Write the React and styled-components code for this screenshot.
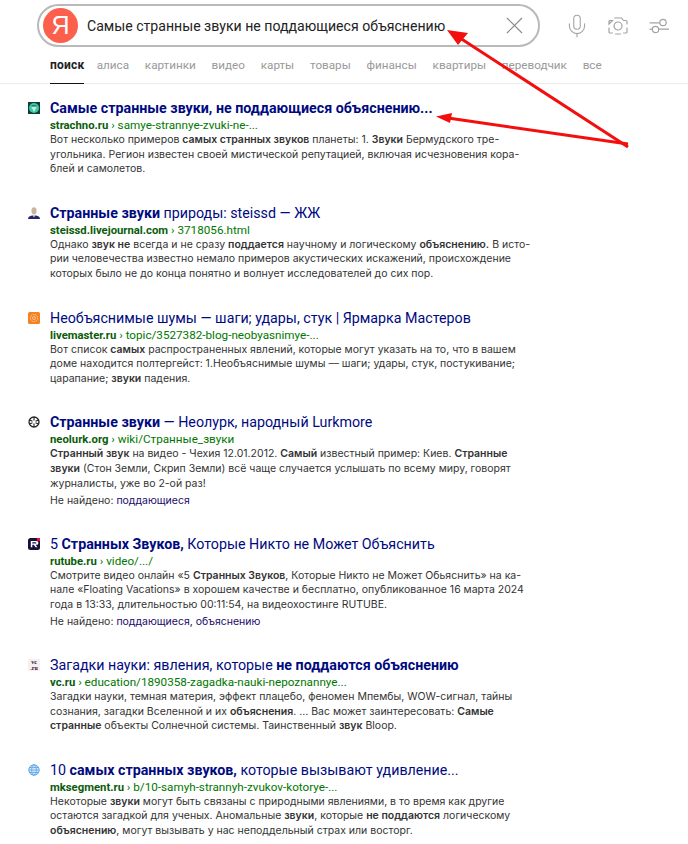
import styled, { createGlobalStyle } from "styled-components";
import { Mic, X } from "lucide-react";

const tabs = ["алиса", "картинки", "видео", "карты", "товары", "финансы", "квартиры", "переводчик", "все"];

const results = [
  {
    icon: "strachno",
    title: <><b>Самые странные звуки, не поддающиеся объяснению...</b></>,
    host: "strachno.ru",
    path: "samye-strannye-zvuki-ne-...",
    lines: [
      <>Вот несколько примеров <b>самых странных звуков</b> планеты: 1. <b>Звуки</b> Бермудского тре-</>,
      <>угольника. Регион известен своей мистической репутацией, включая исчезновения кора-</>,
      <>блей и самолетов.</>,
    ],
  },
  {
    icon: "person",
    title: <><b>Странные звуки</b> природы: steissd — ЖЖ</>,
    host: "steissd.livejournal.com",
    path: "3718056.html",
    lines: [
      <>Однако <b>звук не</b> всегда и не сразу <b>поддается</b> научному и логическому <b>объяснению.</b> В исто-</>,
      <>рии человечества известно немало примеров акустических искажений, происхождение</>,
      <>которых было не до конца понятно и волнует исследователей до сих пор.</>,
    ],
  },
  {
    icon: "livemaster",
    title: <>Необъяснимые шумы — шаги; удары, стук | Ярмарка Мастеров</>,
    host: "livemaster.ru",
    path: "topic/3527382-blog-neobyasnimye-...",
    lines: [
      <>Вот список <b>самых</b> распространенных явлений, которые могут указать на то, что в вашем</>,
      <>доме находится полтергейст: 1.Необъяснимые шумы — шаги; удары, стук, постукивание;</>,
      <>царапание; <b>звуки</b> падения.</>,
    ],
  },
  {
    icon: "neolurk",
    title: <><b>Странные звуки</b> — Неолурк, народный Lurkmore</>,
    host: "neolurk.org",
    path: "wiki/Странные_звуки",
    lines: [
      <><b>Странный звук</b> на видео - Чехия 12.01.2012. <b>Самый</b> известный пример: Киев. <b>Странные</b></>,
      <><b>звуки</b> (Стон Земли, Скрип Земли) всё чаще случается услышать по всему миру, говорят</>,
      <>журналисты, уже во 2-ой раз!</>,
    ],
    missing: "поддающиеся",
  },
  {
    icon: "rutube",
    title: <>5 <b>Странных Звуков,</b> Которые Никто не Может Объяснить</>,
    host: "rutube.ru",
    path: "video/.../",
    lines: [
      <>Смотрите видео онлайн «5 <b>Странных Звуков</b>, Которые Никто не Может Обьяснить» на ка-</>,
      <>нале «Floating Vacations» в хорошем качестве и бесплатно, опубликованное 16 марта 2024</>,
      <>года в 13:33, длительностью 00:11:54, на видеохостинге RUTUBE.</>,
    ],
    missing: "поддающиеся, объяснению",
  },
  {
    icon: "vc",
    title: <>Загадки науки: явления, которые <b>не поддаются объяснению</b></>,
    host: "vc.ru",
    path: "education/1890358-zagadka-nauki-nepoznannye...",
    lines: [
      <>Загадки науки, темная материя, эффект плацебо, феномен Мпембы, WOW-сигнал, тайны</>,
      <>сознания, загадки Вселенной и их <b>объяснения</b>. ... Вас может заинтересовать: <b>Самые</b></>,
      <><b>странные</b> объекты Солнечной системы. Таинственный <b>звук</b> Bloop.</>,
    ],
  },
  {
    icon: "globe",
    title: <>10 <b>самых странных звуков,</b> которые вызывают удивление...</>,
    host: "mksegment.ru",
    path: "b/10-samyh-strannyh-zvukov-kotorye-...",
    lines: [
      <>Некоторые <b>звуки</b> могут быть связаны с природными явлениями, в то время как другие</>,
      <>остаются загадкой для ученых. Аномальные <b>звуки</b>, которые <b>не поддаются</b> логическому</>,
      <><b>объяснению</b>, могут вызывать у нас неподдельный страх или восторг.</>,
    ],
  },
];

const Favicon = ({ kind }) => {
  if (kind === "strachno")
    return (
      <svg width="12" height="12" viewBox="0 0 12 12">
        <rect width="12" height="12" fill="#123c3a" />
        <circle cx="6" cy="6" r="5" fill="#3fc9a4" />
        <path d="M3 4.500h6L6 10z" fill="#b8f0dc" />
        <path d="M4 3h4l1 1.500H3z" fill="#1d7f6c" />
      </svg>
    );
  if (kind === "person")
    return (
      <svg width="12" height="12" viewBox="0 0 12 12">
        <path d="M0 12c0-2.400 2-3 4-3.500h4c2 .5 4 1.100 4 3.500z" fill="#24246e" />
        <ellipse cx="6" cy="3.800" rx="2.600" ry="3.500" fill="#c9b59b" />
        <path d="M5 7h2v2L6 10.500 5 9z" fill="#e2d5c5" />
      </svg>
    );
  if (kind === "livemaster")
    return (
      <svg width="12" height="12" viewBox="0 0 12 12">
        <rect width="12" height="12" rx="1.500" fill="#f58220" />
        <circle cx="6" cy="6" r="3.600" fill="none" stroke="#ffd0a3" strokeWidth="1" strokeDasharray="1.500 .7" />
        <circle cx="6" cy="6" r="1.500" fill="none" stroke="#ffd0a3" strokeWidth="0.800" />
      </svg>
    );
  if (kind === "neolurk")
    return (
      <svg width="12" height="12" viewBox="0 0 12 12">
        <circle cx="6" cy="6" r="5" fill="#fff" stroke="#222" strokeWidth="1.300" />
        <path d="M6 1v3.500M6 7.500V11M1.500 4l3 1.300M10.500 4l-3 1.300M1.500 8l3-1.300M10.500 8l-3-1.300" stroke="#222" strokeWidth="1.100" />
      </svg>
    );
  if (kind === "rutube")
    return (
      <svg width="12" height="12" viewBox="0 0 12 12">
        <rect width="12" height="12" rx="2.500" fill="#14123a" />
        <circle cx="11" cy="1" r="2.200" fill="#ed143b" />
        <path d="M2.800 3h5.700a1.400 1.400 0 0 1 0 3.800H4.300V9.200H2.800zM4.300 4.300v1.200h3.900V4.300zM5.800 6.800h1.800l1.800 2.400H7.600z" fill="#fff" />
      </svg>
    );
  if (kind === "vc") return <VcMark>vc<br />.ru</VcMark>;
  return (
    <svg width="12" height="12" viewBox="0 0 12 12" fill="none">
      <circle cx="6" cy="6" r="5.200" fill="#cfe6fa" stroke="#5aa5e6" strokeWidth="1" />
      <ellipse cx="6" cy="6" rx="2.300" ry="5.200" stroke="#5aa5e6" strokeWidth="0.800" />
      <path d="M1 6h10M1.800 3.500h8.400M1.800 8.500h8.400" stroke="#5aa5e6" strokeWidth="0.800" />
    </svg>
  );
};

const App = () => {
  return (
    <Page>
      <GlobalStyle />
      <Header>
        <SearchBox>
          <Logo>Я</Logo>
          <Query>Самые странные звуки не поддающиеся объяснению</Query>
          <ClearButton><X size={29} strokeWidth={0.9} /></ClearButton>
        </SearchBox>
        <Tools>
          <ToolSlot><Mic size={26} strokeWidth={1} /></ToolSlot>
          <ToolSlot>
            <svg width="20" height="20" viewBox="0 0 20 20" fill="none" stroke="#a3a3a3" strokeWidth="1.200">
              <path d="M6.500 2h7l2 2.500H18a1 1 0 0 1 1 1V8M19 12v4a1 1 0 0 1-1 1h-2.500M4.500 17H2a1 1 0 0 1-1-1v-4M1 8V5.500a1 1 0 0 1 1-1h2.500z" strokeLinecap="round" />
              <path d="M7.500 18h5" strokeLinecap="round" />
              <circle cx="10" cy="10" r="4" />
            </svg>
          </ToolSlot>
          <ToolSlot>
            <svg width="20" height="20" viewBox="0 0 20 20" fill="none" stroke="#a3a3a3" strokeWidth="1.200">
              <path d="M1 6.800h9.500M1 13.200h2.500M10 13.200h9.500" strokeLinecap="round" />
              <circle cx="14" cy="6.500" r="3.200" />
              <circle cx="6.500" cy="13.500" r="3.200" />
            </svg>
          </ToolSlot>
        </Tools>
      </Header>
      <TabBar>
        <Tab $active>поиск</Tab>
        {tabs.map((t) => (
          <Tab key={t}>{t}</Tab>
        ))}
      </TabBar>
      <Results>
        {results.map((r) => (
          <Result key={r.host}>
            <FaviconSlot><Favicon kind={r.icon} /></FaviconSlot>
            <Title>{r.title}</Title>
            <Url><strong>{r.host}</strong> › {r.path}</Url>
            <Snippet>
              {r.lines.map((l, i) => (
                <span key={i}>{l}</span>
              ))}
            </Snippet>
            {r.missing && (
              <Missing>Не найдено: <u>{r.missing}</u></Missing>
            )}
          </Result>
        ))}
      </Results>
      <Arrows width="688" height="844" viewBox="0 0 688 844">
        <path d="M628 147 460 38" stroke="#f40f0f" strokeWidth="3" />
        <path d="M447 30 468 33 458 45z" fill="#f40f0f" />
        <path d="M628 144 448 118" stroke="#f40f0f" strokeWidth="3" />
        <path d="M436 116.500 452 113 450 123z" fill="#f40f0f" />
      </Arrows>
    </Page>
  );
};

export default App;

const GlobalStyle = createGlobalStyle`
  html, body {
    margin: 0;
    background: #fff;
  }
  body {
    font-family: "Inter", "Noto Sans", sans-serif;
  }
`;

const Page = styled.div`
  position: relative;
  width: 688px;
  height: 844px;
  overflow: hidden;
  background: #fff;
`;

const Header = styled.header`
  display: flex;
  align-items: center;
  padding: 4px 0 0 37px;
  height: 43px;
`;

const SearchBox = styled.div`
  display: flex;
  align-items: center;
  box-sizing: border-box;
  width: 503px;
  height: 43px;
  padding: 0 9px 0 4px;
  border: 2px solid #b9b9b9;
  border-radius: 22px;
`;

const Logo = styled.div`
  flex: none;
  width: 35px;
  height: 35px;
  border-radius: 50%;
  background: #fc5f4b;
  color: #fff;
  font-family: "Liberation Sans", sans-serif;
  font-size: 25px;
  line-height: 35px;
  text-align: center;
`;

const Query = styled.div`
  flex: 1;
  margin-left: 9px;
  font-family: "Roboto", sans-serif;
  font-size: 14.100px;
  color: #222;
  white-space: nowrap;
`;

const ClearButton = styled.div`
  display: flex;
  color: #888;
`;

const Tools = styled.div`
  display: flex;
  align-items: center;
  margin-left: 16px;
  color: #a3a3a3;
`;

const ToolSlot = styled.div`
  display: flex;
  justify-content: center;
  width: 41px;
`;

const TabBar = styled.nav`
  display: flex;
  gap: 15.800px;
  height: 37px;
  padding-left: 50px;
  border-bottom: 1px solid #ececec;
  box-sizing: border-box;
`;

const Tab = styled.span`
  display: block;
  height: 37px;
  box-sizing: border-box;
  padding-top: 10px;
  margin-right: ${(p) => (p.$active ? "-3.500px" : "0")};
  font-family: "Roboto", sans-serif;
  font-size: ${(p) => (p.$active ? "12px" : "11.700px")};
  line-height: 16px;
  letter-spacing: ${(p) => (p.$active ? "0.2px" : "0")};
  font-weight: ${(p) => (p.$active ? 700 : 400)};
  color: ${(p) => (p.$active ? "#222" : "#999")};
  border-bottom: ${(p) => (p.$active ? "1px solid #111" : "none")};
`;

const Results = styled.main`
  display: flex;
  flex-direction: column;
  gap: 27px;
  padding: 15px 0 0 50px;
`;

const Result = styled.article`
  position: relative;
  width: 490px;
`;

const FaviconSlot = styled.div`
  position: absolute;
  left: -22px;
  top: 3px;
  width: 12px;
  height: 12px;
  display: flex;
`;

const VcMark = styled.span`
  width: 12px;
  font-family: "Liberation Serif", serif;
  font-size: 6px;
  line-height: 6px;
  font-weight: 700;
  text-align: center;
  color: #2a1220;
  background: #f7eef2;
`;

const Title = styled.h3`
  margin: 0;
  font-family: "Roboto", sans-serif;
  font-size: 14.250px;
  line-height: 19px;
  font-weight: 400;
  color: #000a80;
  white-space: nowrap;

  b {
    font-weight: 700;
  }
`;

const Url = styled.div`
  font-family: "Roboto", sans-serif;
  font-size: 11.700px;
  line-height: 14px;
  color: #070;
  white-space: nowrap;

  strong {
    font-size: 11.300px;
    font-weight: 700;
    color: #0a5c0a;
  }
`;

const Snippet = styled.p`
  margin: 0;
  font-size: 10.500px;
  line-height: 14.600px;
  color: #333;

  span {
    display: block;
    white-space: nowrap;
  }

  b {
    font-weight: 600;
  }
`;

const Missing = styled.div`
  margin: 2px 0 -0.500px;
  font-size: 10.500px;
  line-height: 15px;
  color: #333;

  u {
    text-decoration: none;
    color: #1a0a6a;
  }
`;

const Arrows = styled.svg`
  position: absolute;
  left: 0;
  top: 0;
  pointer-events: none;
`;
